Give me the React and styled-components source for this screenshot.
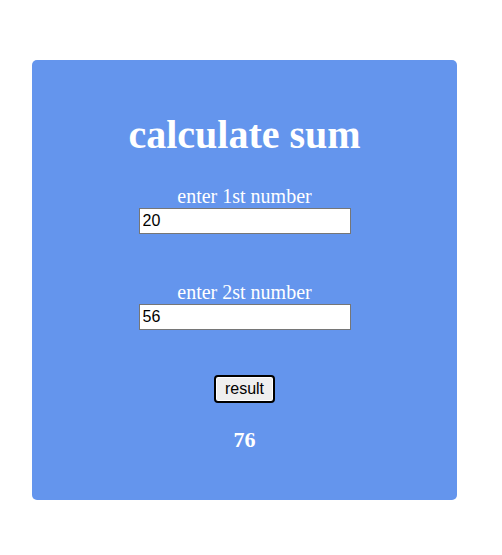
import React, { useState } from 'react'
import styled, { createGlobalStyle } from 'styled-components'

const GlobalStyle = createGlobalStyle`
  body {
    margin: 0;
    background: #fff;
    font-family: "Liberation Serif", "Times New Roman", serif;
  }
`

const Page = styled.div`
  padding: 60px 0 0 32px;
`

const Card = styled.div`
  width: 425px;
  height: 440px;
  box-sizing: border-box;
  background: #6495ed;
  border-radius: 5px;
  padding-top: 52px;
  display: flex;
  flex-direction: column;
  align-items: center;
  color: #fff;
`

const Title = styled.h1`
  margin: 0 0 27px;
  font-size: 40px;
  line-height: 46px;
  font-weight: bold;
`

const Field = styled.div`
  display: flex;
  flex-direction: column;
  align-items: center;
  margin-bottom: ${(p) => p.$gap}px;
`

const Label = styled.label`
  font-size: 20px;
  line-height: 23px;
`

const Input = styled.input`
  width: 212px;
  height: 26px;
  box-sizing: border-box;
  margin: 0;
  padding: 1px 3px;
  border: 1px solid #767676;
  font-family: "Liberation Sans", Arial, sans-serif;
  font-size: 16px;
  color: #000;
  background: #fff;
`

const Button = styled.button`
  width: 61px;
  height: 28px;
  box-sizing: border-box;
  margin: 0 0 24px;
  padding: 0;
  border: 2px solid #000;
  border-radius: 4px;
  box-shadow: inset 0 0 0 1px #fff;
  background: #efefef;
  font-family: "Liberation Sans", Arial, sans-serif;
  font-size: 16px;
  color: #000;
`

const Result = styled.h3`
  margin: 0;
  font-size: 22px;
  line-height: 25px;
  font-weight: bold;
`

export default function App() {
  const [a, setA] = useState('20')
  const [b, setB] = useState('56')
  const [sum, setSum] = useState(76)

  return (
    <Page>
      <GlobalStyle />
      <Card>
        <Title>calculate sum</Title>
        <Field $gap={47}>
          <Label>enter 1st number</Label>
          <Input value={a} onChange={(e) => setA(e.target.value)} />
        </Field>
        <Field $gap={45}>
          <Label>enter 2st number</Label>
          <Input value={b} onChange={(e) => setB(e.target.value)} />
        </Field>
        <Button onClick={() => setSum(Number(a) + Number(b))}>result</Button>
        <Result>{sum}</Result>
      </Card>
    </Page>
  )
}
